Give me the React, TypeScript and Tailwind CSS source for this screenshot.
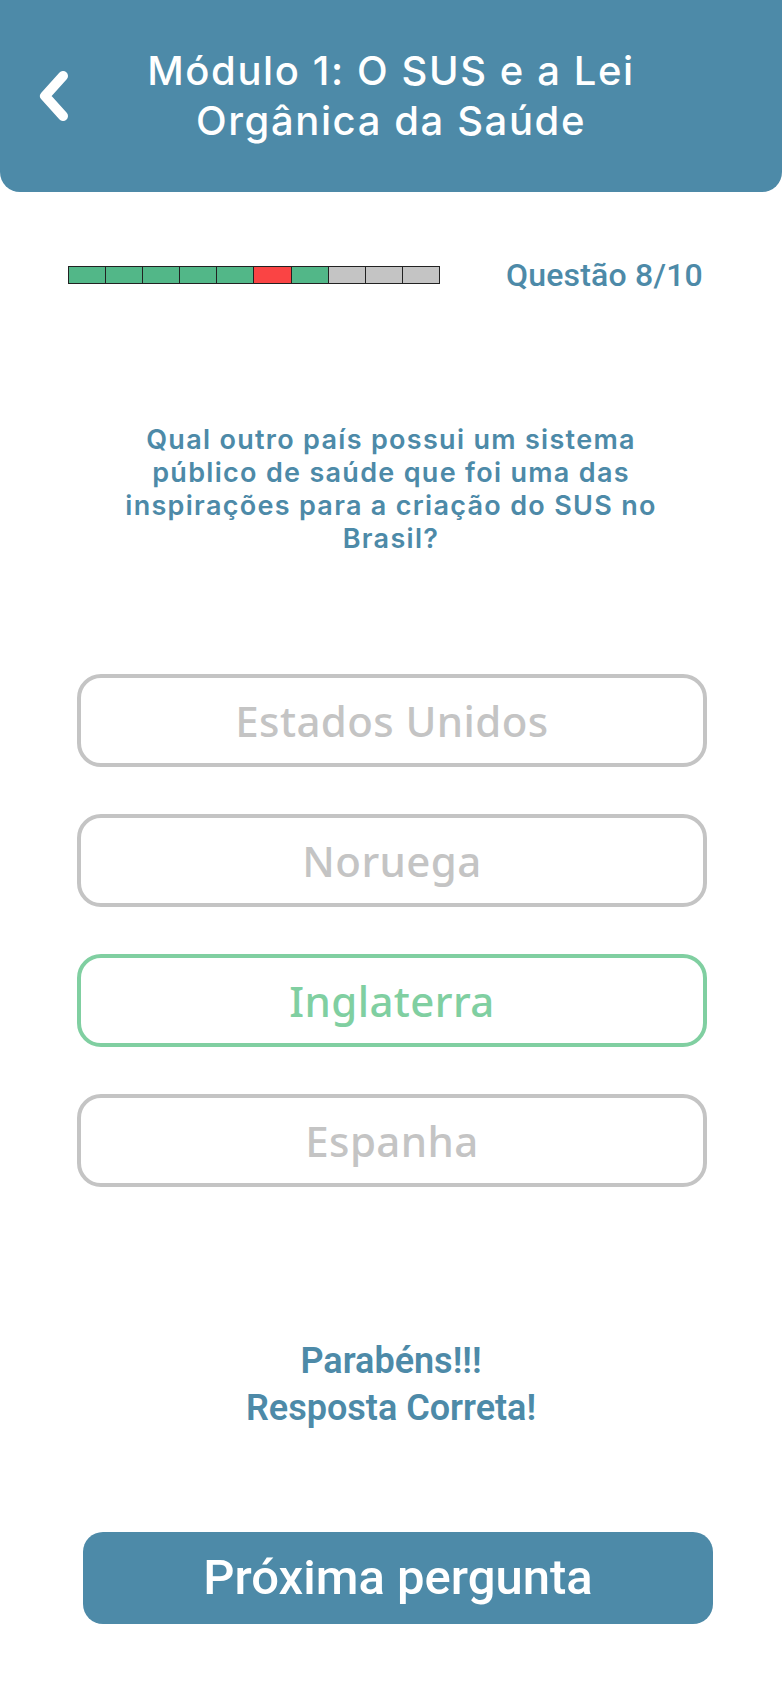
const progress = ['done', 'done', 'done', 'done', 'done', 'wrong', 'done', 'todo', 'todo', 'todo'];

const options = [
  { label: 'Estados Unidos', correct: false },
  { label: 'Noruega', correct: false },
  { label: 'Inglaterra', correct: true },
  { label: 'Espanha', correct: false },
];

function BackChevron() {
  return (
    <svg width="30" height="50" viewBox="0 0 30 50" className="shrink-0">
      <polyline
        points="24,5 6,25 24,45"
        fill="none"
        stroke="white"
        strokeWidth="10"
        strokeLinecap="round"
        strokeLinejoin="round"
      />
    </svg>
  );
}

export default function App() {
  return (
    <div className="w-[782px] min-h-[1692px] bg-white flex flex-col">
      {/* Header */}
      <header className="h-[192px] bg-[#4d8aa8] rounded-b-[20px] flex items-center px-[39px]">
        <BackChevron />
        <h1 className="flex-1 text-center text-white font-['Inter',sans-serif] font-medium text-[40px] leading-[50px] tracking-[1.6px]">
          Módulo 1: O SUS e a Lei
          <br />
          Orgânica da Saúde
        </h1>
        <div className="w-[30px] shrink-0" />
      </header>

      {/* Progress */}
      <div className="mt-[63px] flex items-center pl-[68px]">
        <div className="flex w-[372px] h-[18px] border-[1.5px] border-[#222]">
          {progress.map((p, i) => (
            <div
              key={i}
              className={`flex-1 ${i < progress.length - 1 ? 'border-r-[1.5px] border-[#222]' : ''} ${
                p === 'done' ? 'bg-[#52b788]' : p === 'wrong' ? 'bg-[#fa4444]' : 'bg-[#c4c4c4]'
              }`}
            />
          ))}
        </div>
        <span className="ml-[66px] font-['Roboto',sans-serif] font-medium text-[32px] leading-[40px] text-[#4d8aa8] tracking-[0.2px]">
          Questão 8/10
        </span>
      </div>

      {/* Question */}
      <p className="mt-[128px] text-center font-['Inter',sans-serif] font-semibold text-[27px] leading-[33px] tracking-[1.3px] text-[#4d8aa8]">
        Qual outro país possui um sistema
        <br />
        público de saúde que foi uma das
        <br />
        inspirações para a criação do SUS no
        <br />
        Brasil?
      </p>

      {/* Options */}
      <div className="mt-[119px] flex flex-col gap-[47px] pl-[77px] pr-[75px]">
        {options.map((o) => (
          <button
            key={o.label}
            className={`h-[93px] rounded-[24px] border-[4px] flex items-center justify-center font-['Noto_Sans',sans-serif] font-medium text-[42px] tracking-[0.4px] ${
              o.correct ? 'border-[#80cfa1] text-[#80cfa1]' : 'border-[#c4c4c4] text-[#c4c4c4]'
            }`}
          >
            {o.label}
          </button>
        ))}
      </div>

      {/* Feedback */}
      <p className="mt-[151px] text-center font-['Roboto',sans-serif] font-semibold text-[36px] leading-[47px] text-[#4d8aa8]">
        Parabéns!!!
        <br />
        Resposta Correta!
      </p>

      {/* Next */}
      <div className="mt-[100px] pl-[83px] pr-[69px]">
        <button className="w-full h-[92px] rounded-[20px] bg-[#4d8aa8] text-white font-['Roboto',sans-serif] font-medium text-[49px]">
          Próxima pergunta
        </button>
      </div>
    </div>
  );
}
